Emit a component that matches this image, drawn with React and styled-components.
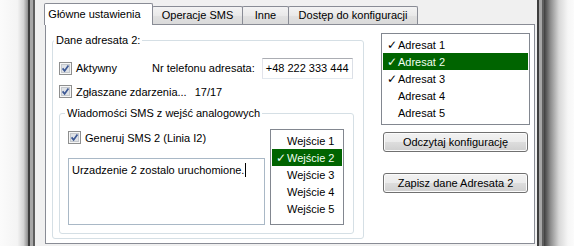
import React from 'react';
import styled, { createGlobalStyle } from 'styled-components';

const GlobalStyle = createGlobalStyle`
  html, body {
    margin: 0;
    padding: 0;
    background: #fff;
  }
  body {
    font-family: "Liberation Sans", Arial, sans-serif;
    font-size: 11px;
    color: #000;
  }
`;

const Screen = styled.div`
  display: flex;
  width: 574px;
  height: 246px;
  overflow: hidden;
`;

const Desk = styled.div`
  flex: 0 0 ${(p) => p.$w}px;
  background: ${(p) =>
    p.$side === 'left'
      ? 'linear-gradient(to right, #fbfbfb 0%, #f4f4f4 62%, #d4d4d4 84%, #8c8c8c 100%)'
      : 'linear-gradient(to right, #3e3e3e 0%, #8e8e8e 22%, #d8d8d8 50%, #f6f6f6 80%, #fbfbfb 100%)'};
`;

const Frame = styled.div`
  flex: 0 0 7px;
  box-sizing: border-box;
  background: #a6a6a6;
  border-left: 2px solid #3d3d3d;
  border-right: 2px solid #5e5e5e;
`;

const Client = styled.div`
  flex: 0 0 502px;
  box-sizing: border-box;
  display: flex;
  flex-direction: column;
  padding: 3px 2px 0 10px;
  background: #f0f0f0;
`;

const TabStrip = styled.div`
  display: flex;
  align-items: flex-end;
  height: 21px;
  position: relative;
  z-index: 1;
`;

const Tab = styled.div`
  box-sizing: border-box;
  display: flex;
  align-items: center;
  justify-content: center;
  width: ${(p) => p.$w}px;
  height: ${(p) => (p.$active ? 22 : 18)}px;
  margin-left: -1px;
  margin-bottom: ${(p) => (p.$active ? -1 : 0)}px;
  padding: ${(p) => (p.$active ? '0 8px 2px 0' : '0 0 1px 0')};
  border: 1px solid #898c95;
  border-bottom: none;
  border-radius: 2px 2px 0 0;
  background: ${(p) => (p.$active ? '#fff' : 'linear-gradient(#f3f3f3, #e9e9e9 50%, #e1e1e1 51%, #dadada)')};
  white-space: nowrap;
`;

const Panel = styled.div`
  box-sizing: border-box;
  display: flex;
  gap: 17px;
  height: 220px;
  padding: 8px 0 0 6px;
  border: 1px solid #898c95;
  background: #fff;
`;

const Group = styled.fieldset`
  box-sizing: border-box;
  min-width: 0;
  margin: ${(p) => p.$top || 0}px 0 0 0;
  width: ${(p) => p.$w}px;
  height: ${(p) => p.$h}px;
  padding: ${(p) => p.$pad};
  border: 1px solid #d5dfe5;
  border-radius: 3px;
`;

const Legend = styled.legend`
  padding: 0 2px;
  margin-left: ${(p) => p.$offset}px;
  line-height: 14px;
`;

const Row = styled.div`
  display: flex;
  align-items: center;
  height: ${(p) => p.$h}px;
  margin-top: ${(p) => p.$top}px;
  gap: ${(p) => p.$gap || 0}px;
  white-space: nowrap;
`;

const CheckItem = styled.label`
  display: flex;
  align-items: center;
  gap: 4px;
  height: 17px;
  ${(p) => (p.$w ? `width: ${p.$w}px;` : '')}
  white-space: nowrap;
`;

const Field = styled.div`
  box-sizing: border-box;
  display: flex;
  align-items: center;
  width: 91px;
  height: 21px;
  margin-left: 7px;
  padding: 0 0 1px 3px;
  border: 1px solid #abadb3;
  border-color: #abadb3 #dbdfe6 #e3e9ef #e2e3ea;
  background: #fff;
  white-space: nowrap;
`;

const InnerBody = styled.div`
  display: flex;
  gap: 5px;
  margin-top: 9px;
`;

const Column = styled.div`
  display: flex;
  flex-direction: column;
  width: ${(p) => p.$w}px;
`;

const TextBox = styled.div`
  box-sizing: border-box;
  height: 67px;
  margin-top: 12px;
  padding: 4px 3px;
  border: 1px solid #a9b8c6;
  background: #fff;
  line-height: 14px;
  white-space: nowrap;
`;

const Caret = styled.span`
  display: inline-block;
  width: 1px;
  height: 14px;
  margin-left: 1px;
  vertical-align: top;
  background: #000;
`;

const List = styled.div`
  box-sizing: border-box;
  width: ${(p) => p.$w}px;
  height: ${(p) => p.$h}px;
  padding: 2px 1px;
  border: 1px solid #828790;
  background: #fff;
`;

const ListItem = styled.div`
  display: flex;
  align-items: center;
  height: 17px;
  padding-left: 4px;
  background: ${(p) => (p.$active ? '#006400' : 'transparent')};
  color: ${(p) => (p.$active ? '#f0fff0' : '#000')};
  white-space: nowrap;
`;

const Tick = styled.span`
  display: inline-block;
  flex: 0 0 11px;
  font-family: "DejaVu Sans", sans-serif;
  font-size: 12px;
  line-height: 1;
`;

const Button = styled.div`
  box-sizing: border-box;
  display: flex;
  align-items: center;
  justify-content: center;
  width: 145px;
  height: 20px;
  margin: ${(p) => p.$top}px 0 0 2px;
  border: 1px solid #707070;
  border-radius: 3px;
  background: linear-gradient(#f2f2f2 0%, #ebebeb 50%, #dddddd 51%, #cfcfcf 100%);
  box-shadow: inset 0 0 0 1px #fbfbfb;
  white-space: nowrap;
`;

const CheckBox = () => (
  <svg width="13" height="13" viewBox="0 0 13 13">
    <rect x="0.5" y="0.5" width="12" height="12" fill="#f6f6f6" stroke="#8e8f8f" />
    <rect x="2.5" y="2.5" width="8" height="8" fill="#dfe2e6" stroke="#c4c8cd" />
    <path d="M3.6 6.4 L5.6 8.9 L9.4 3.4" fill="none" stroke="#3c5894" strokeWidth="1.7" />
  </svg>
);

const tabs = [
  { label: 'Główne ustawienia', w: 109, active: true },
  { label: 'Operacje SMS', w: 91 },
  { label: 'Inne', w: 47 },
  { label: 'Dostęp do konfiguracji', w: 130 },
];

const adresaci = [
  { label: 'Adresat 1', checked: true },
  { label: 'Adresat 2', checked: true, active: true },
  { label: 'Adresat 3', checked: true },
  { label: 'Adresat 4' },
  { label: 'Adresat 5' },
];

const wejscia = [
  { label: 'Wejście 1' },
  { label: 'Wejście 2', checked: true, active: true },
  { label: 'Wejście 3' },
  { label: 'Wejście 4' },
  { label: 'Wejście 5' },
];

const CheckList = ({ items, w, h }) => (
  <List $w={w} $h={h}>
    {items.map((it) => (
      <ListItem key={it.label} $active={it.active}>
        <Tick>{it.checked ? '✓' : ''}</Tick>
        {it.label}
      </ListItem>
    ))}
  </List>
);

const App = () => (
  <>
    <GlobalStyle />
    <Screen>
      <Desk $w={28} $side="left" />
      <Frame />
      <Client>
        <TabStrip>
          {tabs.map((t) => (
            <Tab key={t.label} $w={t.w} $active={t.active}>
              {t.label}
            </Tab>
          ))}
        </TabStrip>
        <Panel>
          <Group $w={312} $h={206} $pad="0 9px 4px 6px">
            <Legend $offset={-5}>Dane adresata 2:</Legend>
            <Row $h={22} $top={10}>
              <CheckItem $w={93}>
                <CheckBox />
                Aktywny
              </CheckItem>
              Nr telefonu adresata:
              <Field>+48 222 333 444</Field>
            </Row>
            <Row $h={17} $top={4} $gap={8}>
              <CheckItem>
                <CheckBox />
                Zgłaszane zdarzenia...
              </CheckItem>
              17/17
            </Row>
            <Group $w={295} $h={128} $top={6} $pad="0 9px 8px 8px">
              <Legend $offset={-3}>Wiadomości SMS z wejść analogowych</Legend>
              <InnerBody>
                <Column $w={197}>
                  <CheckItem>
                    <CheckBox />
                    Generuj SMS 2 (Linia I2)
                  </CheckItem>
                  <TextBox>
                    Urzadzenie 2 zostalo uruchomione.
                    <Caret />
                  </TextBox>
                </Column>
                <CheckList items={wejscia} w={74} h={96} />
              </InnerBody>
            </Group>
          </Group>
          <Column $w={149}>
            <CheckList items={adresaci} w={149} h={92} />
            <Button $top={7}>Odczytaj konfigurację</Button>
            <Button $top={21}>Zapisz dane Adresata 2</Button>
          </Column>
        </Panel>
      </Client>
      <Frame />
      <Desk $w={30} $side="right" />
    </Screen>
  </>
);

export default App;
